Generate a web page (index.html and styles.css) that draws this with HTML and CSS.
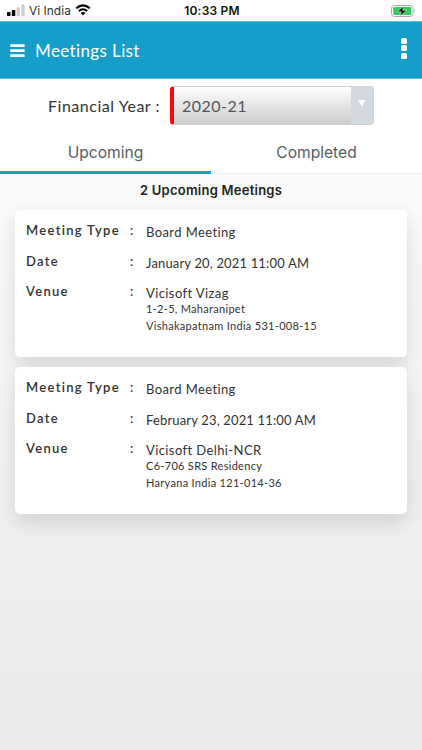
FILE: index.html
```
<!DOCTYPE html>
<html lang="en">
<head>
<meta charset="UTF-8" />
<meta name="viewport" content="width=device-width, initial-scale=1" />
<title>Meetings List</title>
<link rel="stylesheet" href="styles.css">
</head>
<body>

<!-- Status bar -->
<div class="statusBar">
  <div class="carrier">
    <svg class="signal" width="18" height="12" viewBox="0 0 18 12">
      <rect x="0" y="8" width="3.5" height="4" rx="0.8" fill="#000"/>
      <rect x="4.8" y="6" width="3.5" height="6" rx="0.8" fill="#000"/>
      <rect x="9.6" y="3.3" width="3.3" height="8.7" rx="0.8" fill="#ccc"/>
      <rect x="14.4" y="0.6" width="3.3" height="11.4" rx="0.8" fill="#ccc"/>
    </svg>
    <span class="carrierName">Vi India</span>
    <svg class="wifi" width="16" height="12" viewBox="0 0 16 12">
      <path d="M1.2 4.3Q8 -1.7 14.8 4.3" fill="none" stroke="#000" stroke-width="2.2"/>
      <path d="M3.8 7.1Q8 3.4 12.2 7.1" fill="none" stroke="#000" stroke-width="2"/>
      <path d="M5.7 9Q8 7.2 10.3 9L8 11.4Z" fill="#000"/>
    </svg>
  </div>
  <div class="clock">10:33 PM</div>
  <svg class="battery" width="26" height="12" viewBox="0 0 26 12">
    <rect x="0.5" y="0.5" width="21.6" height="11" rx="3" fill="#fff" stroke="#aaa"/>
    <rect x="2.2" y="2.1" width="18.2" height="7.8" rx="1.4" fill="#35cc5b"/>
    <path d="M23.4 4Q25 6 23.4 8Z" fill="#999"/>
    <path d="M12.8 1L6.5 6.7H10.3L9 11L15.6 5.2H11.6Z" fill="#000" stroke="#fff" stroke-width="0.5"/>
  </svg>
</div>

<!-- Header -->
<div class="header">
  <svg class="menuIcon" width="15" height="13" viewBox="0 0 15 13">
    <path d="M0.3 1.6H14.6M0.3 6.6H14.6M0.3 11.6H14.6" stroke="#fff" stroke-width="2.6"/>
  </svg>
  <h1>Meetings List</h1>
  <div class="moreDots"><i></i><i></i><i></i></div>
</div>

<!-- Year filter -->
<div class="yearRow">
  <span class="yearLabel">Financial Year :</span>
  <div class="yearSelect">
    <span class="yearValue">2020-21</span>
    <span class="yearArrow"><svg width="8" height="7" viewBox="0 0 8 7"><path d="M0.3 0H7.3L3.8 6.7Z" fill="#fff"/></svg></span>
  </div>
</div>

<!-- Tabs -->
<div class="tabs">
  <div class="tab active"><span>Upcoming</span></div>
  <div class="tab"><span>Completed</span></div>
</div>

<div class="content">
  <div class="count">2 Upcoming Meetings</div>

  <div class="card">
    <div class="row">
      <span class="label">Meeting Type</span><span class="colon">:</span>
      <div class="value"><span class="type">Board Meeting</span></div>
    </div>
    <div class="row">
      <span class="label">Date</span><span class="colon">:</span>
      <div class="value"><span class="date">January 20, 2021 11:00 AM</span></div>
    </div>
    <div class="row">
      <span class="label">Venue</span><span class="colon">:</span>
      <div class="value"><span class="place">Vicisoft Vizag</span><small>1-2-5, Maharanipet<br>Vishakapatnam India 531-008-15</small></div>
    </div>
  </div>

  <div class="card">
    <div class="row">
      <span class="label">Meeting Type</span><span class="colon">:</span>
      <div class="value"><span class="type">Board Meeting</span></div>
    </div>
    <div class="row">
      <span class="label">Date</span><span class="colon">:</span>
      <div class="value"><span class="date">February 23, 2021 11:00 AM</span></div>
    </div>
    <div class="row">
      <span class="label">Venue</span><span class="colon">:</span>
      <div class="value"><span class="place">Vicisoft Delhi-NCR</span><small>C6-706 SRS Residency<br>Haryana India 121-014-36</small></div>
    </div>
  </div>
</div>

</body>
</html>
```
FILE: styles.css
```
* { box-sizing: border-box; }
body {
  margin: 0;
  height: 750px;
  display: flex;
  flex-direction: column;
  overflow: hidden;
  background: #fff;
  color: #333;
  font-family: Lato, "Open Sans", sans-serif;
}

/* Status bar */
.statusBar {
  height: 21px;
  display: grid;
  grid-template-columns: 1fr auto 1fr;
  align-items: center;
  padding: 0 5px 0 7px;
  font-family: Inter, sans-serif;
  font-size: 12px;
  line-height: 20px;
  color: #111;
}
.carrier {
  display: flex;
  align-items: center;
}
.signal { margin-top: -2px; }
.carrierName {
  margin-left: 4px;
  color: #333;
}
.wifi { margin: -1px 0 0 4px; }
.clock {
  padding-top: 1px;
  font-size: 12px;
  font-weight: 600;
  letter-spacing: 0.2px;
}
.battery { justify-self: end; }

/* Header */
.header {
  height: 58px;
  display: flex;
  align-items: center;
  padding: 0 15px 0 10px;
  background: #169ecb;
  border-top: 1px solid #5bbcda;
  border-bottom: 1px solid #63b4d1;
  color: #fff;
}
.header h1 {
  flex: 1;
  margin: 0 0 0 10px;
  padding-top: 1px;
  font-size: 17px;
  font-weight: 400;
  letter-spacing: 0.38px;
}
.moreDots {
  display: flex;
  flex-direction: column;
  gap: 1.5px;
  margin-top: -4px;
}
.moreDots i {
  width: 6px;
  height: 6px;
  border-radius: 1.5px;
  background: #fff;
}

/* Year filter */
.yearRow {
  height: 53px;
  display: flex;
  align-items: center;
  padding-left: 48px;
}
.yearLabel {
  width: 122px;
  font-size: 16px;
  letter-spacing: 0.53px;
}
.yearSelect {
  width: 204px;
  height: 39px;
  display: flex;
  align-items: center;
  overflow: hidden;
  border: 1px solid #cdd1d6;
  border-left: 4px solid #f90808;
  border-radius: 4px;
  background: linear-gradient(#fff, #ccc);
}
.yearValue {
  flex: 1;
  padding-left: 8px;
  font-size: 16px;
  letter-spacing: 0.5px;
  color: #50555a;
}
.yearArrow {
  width: 22px;
  height: 100%;
  display: flex;
  align-items: center;
  justify-content: center;
  padding-bottom: 4px;
  background: #d4d9df;
}

/* Tabs */
.tabs {
  height: 42px;
  display: flex;
  font-family: Inter, sans-serif;
  font-size: 15.6px;
  color: #565e66;
}
.tab {
  flex: 1;
  display: flex;
  align-items: center;
  justify-content: center;
  border-bottom: 1px solid #e9ecef;
}
.tab.active {
  padding-top: 2px;
  border-bottom: 3px solid #169ecb;
}

/* Meetings */
.content {
  flex: 1;
  padding: 0 15px;
  background: linear-gradient(#fbfbfb, #efefef 60%, #e9e9e9);
}
.count {
  height: 36px;
  line-height: 32px;
  text-align: center;
  font-family: Inter, sans-serif;
  font-size: 13px;
  font-weight: 600;
  letter-spacing: 0.24px;
  color: #222;
}
.card {
  height: 147px;
  margin-bottom: 10px;
  padding: 10px 11px;
  border-radius: 5px;
  background: #fff;
  box-shadow: 0 8px 20px rgba(0, 0, 0, 0.12);
}
.row {
  display: grid;
  grid-template-columns: 104px 16px 1fr;
  min-height: 30.5px;
}
.label, .colon {
  font-size: 13px;
  font-weight: 600;
  line-height: 20px;
  letter-spacing: 1.3px;
}
.value {
  padding-top: 2px;
  font-size: 13px;
  line-height: 20px;
  letter-spacing: 0.4px;
}
.date { letter-spacing: 0.16px; }
.value small {
  display: block;
  margin-top: -3px;
  font-size: 11px;
  line-height: 17px;
  letter-spacing: 0.3px;
}
```
